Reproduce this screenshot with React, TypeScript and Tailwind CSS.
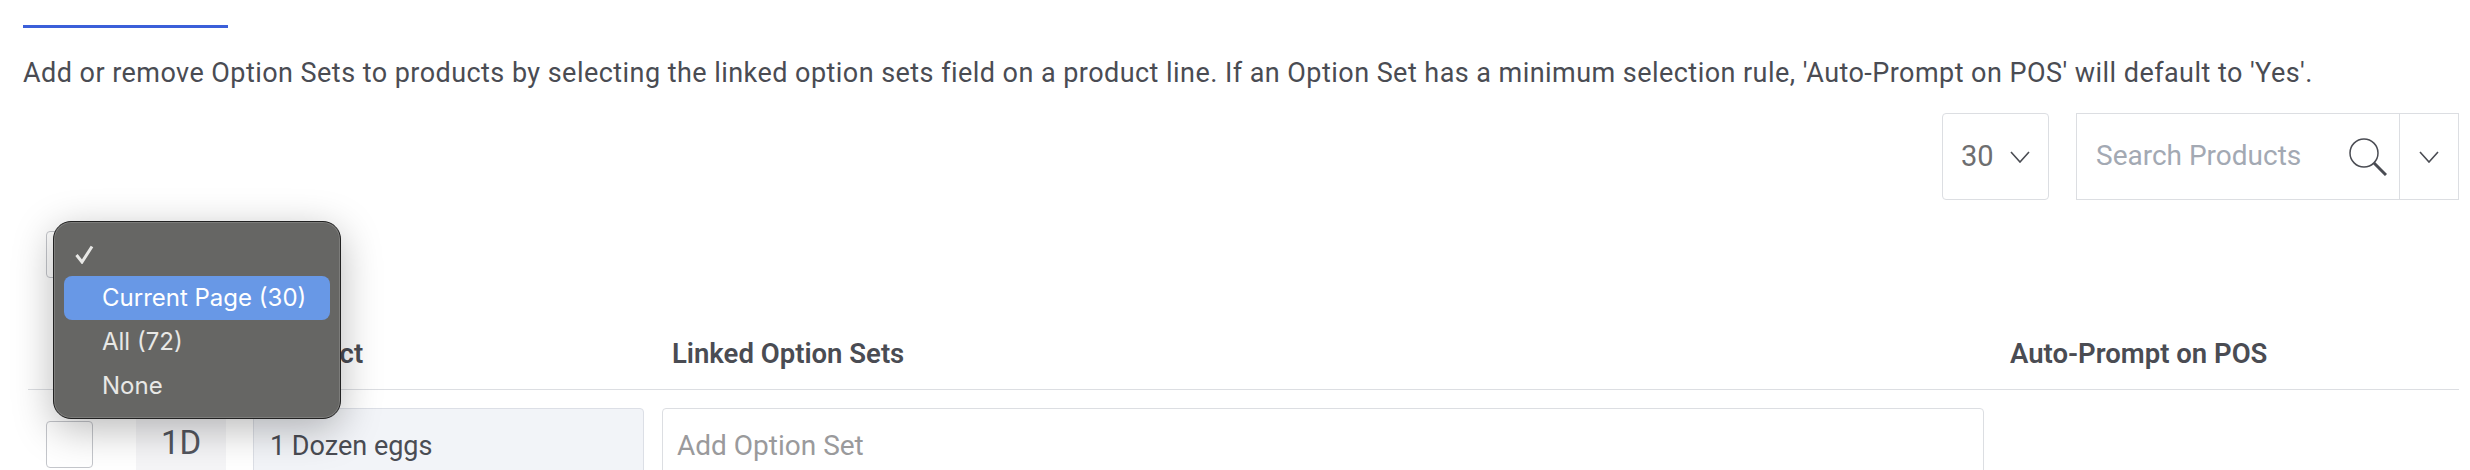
import React from 'react';

const Chevron = ({ className }: { className: string }) => (
    <svg className={className} viewBox="0 0 20 12" fill="none" stroke="#4a4c53" strokeWidth="1.6">
        <path d="M1 1l9 10 9-10" />
    </svg>
);

const SearchIcon = () => (
    <svg className="w-[38px] h-[38px]" viewBox="0 0 38 38" fill="none" stroke="#4a4c53">
        <circle cx="15" cy="15" r="14" strokeWidth="1.5" />
        <path d="M25 25l12 12" strokeWidth="3" />
    </svg>
);

const menuItems = ['Current Page (30)', 'All (72)', 'None'];

export default function App() {
    return (
        <div className="relative w-[2470px] h-[470px] overflow-hidden bg-white font-['Roboto',sans-serif] text-[#4a4c53]">
            <div className="pl-[23px] pt-[25px] pr-[11px]">
                <div className="w-[205px] h-[3px] bg-[#3b5fd9]" />
                <p className="mt-[29px] h-[32px] text-[27px] leading-[32px] tracking-[0.45px] whitespace-nowrap">
                    Add or remove Option Sets to products by selecting the linked option sets field on a product line. If an Option Set has a minimum selection rule, 'Auto-Prompt on POS' will default to 'Yes'.
                </p>

                <div className="mt-[24px] flex justify-end gap-[27px]">
                    <div className="w-[107px] h-[87px] flex items-center pl-[18px] gap-[16px] border border-[#dcdee2] rounded-[4px]">
                        <span className="text-[29px] text-[#6e6e70]">30</span>
                        <Chevron className="w-[20px] h-[12px]" />
                    </div>
                    <div className="w-[383px] h-[87px] flex border border-[#dcdee2]">
                        <div className="flex-1 flex items-center justify-between pl-[19px] pr-[12px]">
                            <span className="text-[28px] leading-[32px] pb-[2px] text-[#a3a9b3]">Search Products</span>
                            <SearchIcon />
                        </div>
                        <div className="w-[59px] flex items-center justify-center border-l border-[#dcdee2]">
                            <Chevron className="w-[20px] h-[12px]" />
                        </div>
                    </div>
                </div>

                <div className="mt-[31px] ml-[23px] w-[47px] h-[47px] border border-[#c4c6cb] rounded-[4px]" />

                <div className="mt-[52px] ml-[5px] h-[60px] pb-[12px] flex items-center border-b border-[#dcdee2] font-semibold text-[27.5px]">
                    <span className="ml-[238px] w-[406px]">Product</span>
                    <span className="w-[1338px]">Linked Option Sets</span>
                    <span>Auto-Prompt on POS</span>
                </div>

                <div className="mt-[18px] ml-[23px] flex items-start">
                    <div className="mt-[13px] w-[47px] h-[47px] border border-[#c4c6cb] rounded-[4px]" />
                    <div className="ml-[43px] w-[90px] h-[70px] flex items-center justify-center bg-[#f5f5f7] text-[33px] text-[#53565e]">
                        1D
                    </div>
                    <div className="ml-[27px] w-[391px] h-[76px] flex items-center pl-[16px] bg-[#f2f4f8] border border-[#dcdfe6] rounded-[4px] text-[27px]">
                        1 Dozen eggs
                    </div>
                    <div className="ml-[18px] w-[1322px] h-[76px] flex items-center pl-[14px] border border-[#dcdee2] rounded-[4px] text-[28px] text-[#9a9a9c]">
                        Add Option Set
                    </div>
                </div>
            </div>

            <div className="absolute left-[53px] top-[221px] w-[288px] h-[198px] px-[10px] pt-[10px] bg-[#666664] border border-[#222222] rounded-[18px] shadow-[inset_0_0_0_1px_#7d7d7b,0_10px_40px_rgba(0,0,0,0.28)] font-['Inter',sans-serif] text-[24px] text-[#e8e8e6]">
                <div className="h-[44px] flex items-center pl-[11px]">
                    <svg className="w-[19px] h-[19px]" viewBox="0 0 19 19" fill="none" stroke="#e8e8e6" strokeWidth="3">
                        <path d="M1.5 10l5.5 7L17 1.5" />
                    </svg>
                </div>
                {menuItems.map((item, i) => (
                    <div
                        key={item}
                        className={i === 0 ? 'h-[44px] flex items-center pl-[38px] bg-[#6898e6] rounded-[8px] text-white' : 'h-[44px] flex items-center pl-[38px]'}
                    >
                        {item}
                    </div>
                ))}
            </div>
        </div>
    );
}
